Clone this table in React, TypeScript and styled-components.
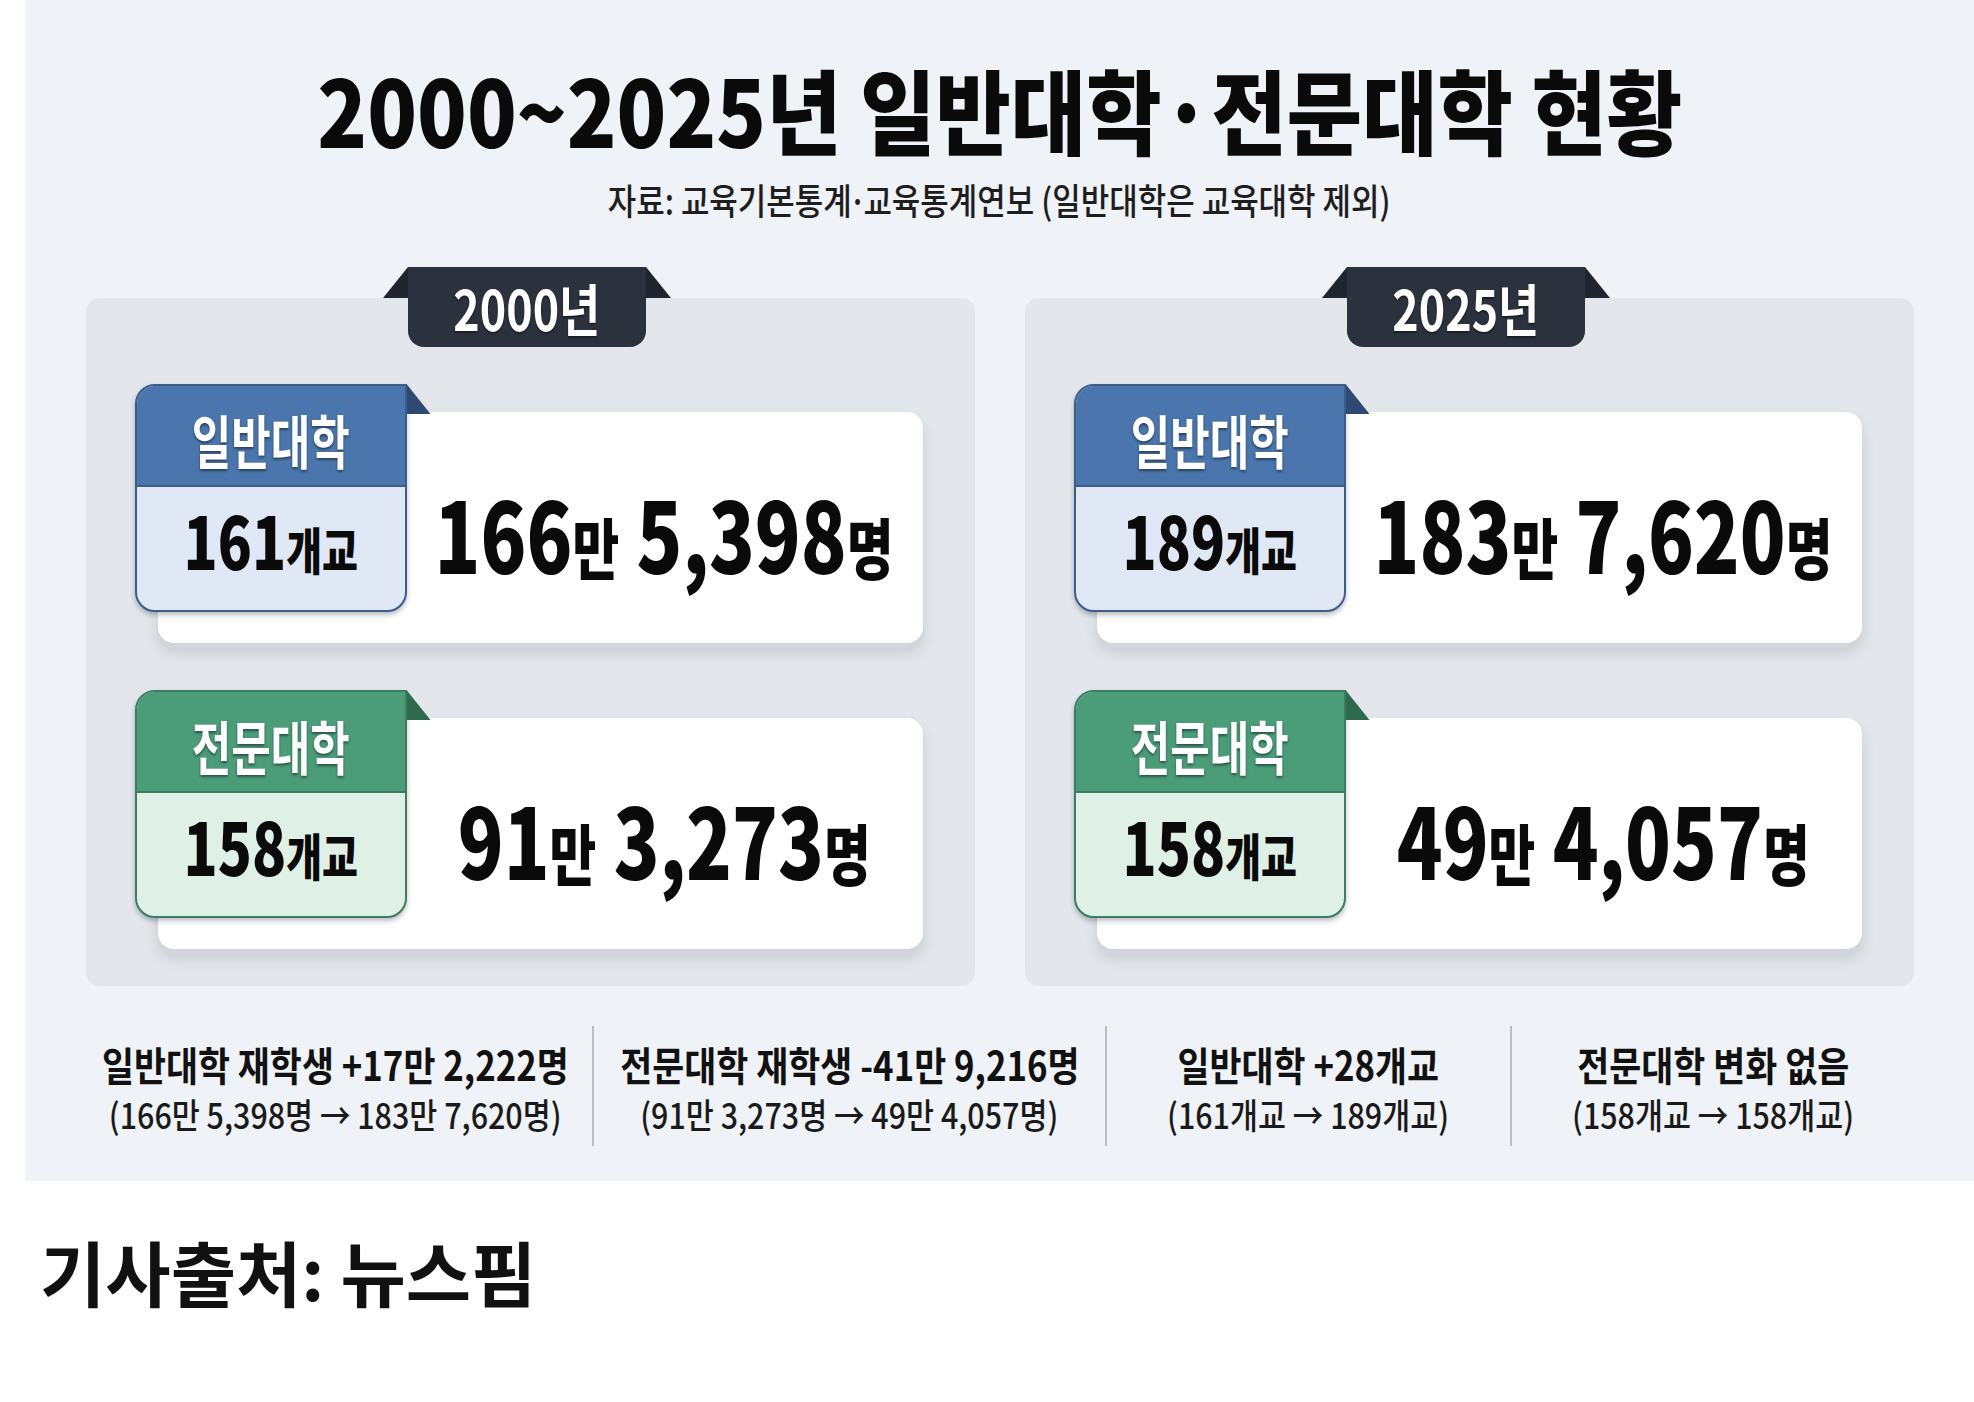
import styled, { createGlobalStyle } from "styled-components";

const GlobalStyle = createGlobalStyle`
  html, body {
    margin: 0;
    padding: 0;
    background: #ffffff;
  }
  body {
    font-family: "Noto Sans CJK KR", "Noto Sans", sans-serif;
    color: #0d0d0d;
  }
`;

type Tone = "blue" | "green";

const tones: Record<Tone, { head: string; body: string; edge: string; fold: string }> = {
  blue: { head: "#4a76ad", body: "#dfe8f4", edge: "#3b5d8b", fold: "#2e4a72" },
  green: { head: "#4b9c79", body: "#dff1e6", edge: "#3c7d60", fold: "#2d6a4e" },
};

const years = [
  {
    year: "2000년",
    rows: [
      { tone: "blue" as Tone, name: "일반대학", schools: "161", man: "166", rest: "5,398" },
      { tone: "green" as Tone, name: "전문대학", schools: "158", man: "91", rest: "3,273" },
    ],
  },
  {
    year: "2025년",
    rows: [
      { tone: "blue" as Tone, name: "일반대학", schools: "189", man: "183", rest: "7,620" },
      { tone: "green" as Tone, name: "전문대학", schools: "158", man: "49", rest: "4,057" },
    ],
  },
];

const changes = [
  { head: "일반대학 재학생 +17만 2,222명", sub: "(166만 5,398명 → 183만 7,620명)" },
  { head: "전문대학 재학생 -41만 9,216명", sub: "(91만 3,273명 → 49만 4,057명)" },
  { head: "일반대학 +28개교", sub: "(161개교 → 189개교)" },
  { head: "전문대학 변화 없음", sub: "(158개교 → 158개교)" },
];

const App = () => {
  return (
    <Page>
      <GlobalStyle />
      <Sheet>
        <Title>
          <Squeeze $x={0.89}>2000~2025년 일반대학·전문대학 현황</Squeeze>
        </Title>
        <Source>
          <Squeeze $x={0.86}>
            자료: 교육기본통계<Dot>·</Dot>교육통계연보 (일반대학은 교육대학 제외)
          </Squeeze>
        </Source>
        <Panels>
          {years.map((y) => (
            <Panel key={y.year}>
              <Tag>
                <Squeeze $x={0.8}>{y.year}</Squeeze>
              </Tag>
              {y.rows.map((r) => (
                <Row key={r.name}>
                  <Label $tone={r.tone}>
                    <LabelHead $tone={r.tone}>
                      <Squeeze $x={0.74}>{r.name}</Squeeze>
                    </LabelHead>
                    <LabelCount>
                      <Squeeze $x={0.78}>
                        {r.schools}
                        <Small>개교</Small>
                      </Squeeze>
                    </LabelCount>
                  </Label>
                  <Card>
                    <BigNumber>
                      <Squeeze $x={0.77}>
                        {r.man}
                        <Unit>만</Unit> {r.rest}
                        <Unit>명</Unit>
                      </Squeeze>
                    </BigNumber>
                  </Card>
                </Row>
              ))}
            </Panel>
          ))}
        </Panels>
        <Stats>
          {changes.map((c) => (
            <StatCell key={c.head}>
              <StatHead>
                <Squeeze $x={0.87}>{c.head}</Squeeze>
              </StatHead>
              <StatSub>
                <Squeeze $x={0.87}>{c.sub}</Squeeze>
              </StatSub>
            </StatCell>
          ))}
        </Stats>
      </Sheet>
      <Credit>기사출처: 뉴스핌</Credit>
    </Page>
  );
};

const Page = styled.div`
  width: 1974px;
  min-height: 1402px;
  background: #ffffff;
`;

const Sheet = styled.section`
  margin-left: 25px;
  width: 1949px;
  height: 1181px;
  box-sizing: border-box;
  padding-top: 58px;
  background: #eff2f6;
  display: flex;
  flex-direction: column;
  align-items: center;
`;

const Squeeze = styled.span<{ $x: number }>`
  display: inline-block;
  white-space: nowrap;
  transform: scaleX(${(p) => p.$x});
  transform-origin: center;
`;

const Dot = styled.span`
  margin: 0 -0.1em;
`;

const Title = styled.h1`
  margin: 0;
  font-size: 92px;
  font-weight: 900;
  line-height: 100px;
  color: #0a0a0a;
  display: flex;
  justify-content: center;
`;

const Source = styled.p`
  margin: 19px 0 0;
  font-size: 36px;
  font-weight: 500;
  line-height: 44px;
  color: #1e1e1e;
  display: flex;
  justify-content: center;
`;

const Panels = styled.div`
  margin-top: 77px;
  display: flex;
  gap: 50px;
`;

const Panel = styled.div`
  width: 889px;
  height: 688px;
  box-sizing: border-box;
  padding: 0 52px 0 49px;
  background: #e3e6eb;
  border-radius: 14px;
  display: flex;
  flex-direction: column;
`;

const Tag = styled.div`
  position: relative;
  align-self: center;
  width: 238px;
  height: 80px;
  margin-top: -31px;
  margin-left: -3px;
  background: #2b323e;
  border-radius: 0 0 16px 16px;
  color: #ffffff;
  font-size: 56px;
  font-weight: 700;
  line-height: 1;
  display: flex;
  align-items: center;
  justify-content: center;
  text-shadow: 0 2px 2px rgba(0, 0, 0, 0.4);

  &::before,
  &::after {
    content: "";
    position: absolute;
    top: 0;
    width: 25px;
    height: 31px;
    background: #1f252e;
  }
  &::before {
    left: -25px;
    clip-path: polygon(100% 0, 0 100%, 100% 100%);
  }
  &::after {
    right: -25px;
    clip-path: polygon(0 0, 100% 100%, 0 100%);
  }
`;

const Row = styled.div`
  display: grid;
  grid-template-columns: 23px 249px 1fr;
  grid-template-rows: 28px 200px 31px;
  margin-top: 37px;

  & + & {
    margin-top: 47px;
  }
`;

const Label = styled.div<{ $tone: Tone }>`
  grid-column: 1 / 3;
  grid-row: 1 / 3;
  position: relative;
  z-index: 1;
  display: flex;
  flex-direction: column;
  border: 2px solid ${(p) => tones[p.$tone].edge};
  border-radius: 20px 0 20px 20px;
  background: ${(p) => tones[p.$tone].body};
  box-shadow: 0 3px 5px rgba(30, 40, 60, 0.3);

  &::after {
    content: "";
    position: absolute;
    left: calc(100% + 2px);
    top: -2px;
    width: 24px;
    height: 30px;
    background: ${(p) => tones[p.$tone].fold};
    clip-path: polygon(0 0, 100% 100%, 0 100%);
  }
`;

const LabelHead = styled.div<{ $tone: Tone }>`
  height: 101px;
  box-sizing: border-box;
  padding-top: 6px;
  background: ${(p) => tones[p.$tone].head};
  border-radius: 18px 0 0 0;
  border-bottom: 2px solid ${(p) => tones[p.$tone].edge};
  color: #ffffff;
  font-size: 58px;
  font-weight: 700;
  line-height: 1;
  display: flex;
  align-items: center;
  justify-content: center;
  text-shadow: 0 2px 3px rgba(0, 0, 0, 0.45);
`;

const LabelCount = styled.div`
  flex: 1;
  padding-bottom: 20px;
  font-size: 72px;
  font-weight: 800;
  line-height: 1;
  color: #0a0a0a;
  display: flex;
  align-items: center;
  justify-content: center;
`;

const Small = styled.span`
  font-size: 50px;
`;

const Card = styled.div`
  grid-column: 2 / 4;
  grid-row: 2 / 4;
  box-sizing: border-box;
  padding: 6px 0 0 249px;
  background: #ffffff;
  border-radius: 16px;
  box-shadow: 0 5px 0 #d2d6dc, 0 9px 14px rgba(50, 60, 80, 0.16);
  display: flex;
  align-items: center;
  justify-content: center;
`;

const BigNumber = styled.div`
  font-size: 98px;
  font-weight: 900;
  line-height: 1;
  color: #0a0a0a;
`;

const Unit = styled.span`
  font-size: 66px;
`;

const Stats = styled.div`
  align-self: flex-start;
  margin: 40px 0 0 53px;
  display: grid;
  grid-template-columns: 514px 513px 405px 404px;
`;

const StatCell = styled.div`
  height: 120px;
  box-sizing: border-box;
  padding-top: 14px;
  display: flex;
  flex-direction: column;
  align-items: center;

  & + & {
    border-left: 2px solid #b9bdc4;
  }
`;

const StatHead = styled.div`
  font-size: 40px;
  font-weight: 700;
  line-height: 48px;
  color: #111111;
  display: flex;
  justify-content: center;
`;

const StatSub = styled.div`
  margin-top: 4px;
  font-size: 35px;
  font-weight: 500;
  line-height: 44px;
  color: #1a1a1a;
  display: flex;
  justify-content: center;
`;

const Credit = styled.p`
  margin: 49px 0 0;
  padding-left: 40px;
  font-size: 71px;
  font-weight: 700;
  line-height: 80px;
  color: #111111;
`;

export default App;
